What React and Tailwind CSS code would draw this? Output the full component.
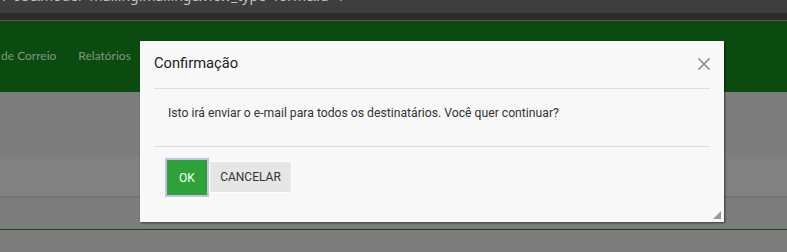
export default function App() {
  const font = { fontFamily: 'Roboto, "Liberation Sans", sans-serif' };
  return (
    <div className="relative w-[787px] h-[252px] overflow-hidden bg-[#7d7d7d]" style={font}>
      {/* browser top bar */}
      <div className="h-[13px] bg-[#3e3e3e] overflow-hidden relative">
        <div className="absolute left-[-3px] top-[-12px] text-[14px] text-[#c4c4c4] whitespace-nowrap leading-[16px]" style={{ fontFamily: '"Noto Sans", sans-serif' }}>
          n=95&amp;model=mailing.mailing&amp;view_type=form&amp;id=1
        </div>
      </div>
      <div className="h-[7px] bg-[#2c2c2c]" />
      <div className="h-[1px] bg-[#555555]" />
      {/* nav */}
      <div className="h-[71px] bg-[#0b4b10] flex items-center gap-[22px] pl-[1px] pb-[1px] text-[12px] text-[#7d9a7d]" style={{ fontFamily: 'Lato, sans-serif' }}>
        <span>de Correio</span>
        <span>Relatórios</span>
      </div>
      <div className="h-[65px]" />
      <div className="h-[39px] bg-[#818181]" />
      <div className="h-[2px] bg-[#737373]" />
      <div className="h-[31px]" />
      <div className="h-[1px] bg-[#0b4b10]" />

      {/* modal */}
      <div className="absolute left-[140px] top-[41px] w-[584px] h-[181px] bg-[#f8f8f8] shadow-[1px_1px_2px_rgba(0,0,0,0.55)] flex flex-col px-[14px]">
        <div className="h-[48px] flex items-center justify-between border-b border-[#dddddd] pb-[2px]">
          <span className="text-[14.7px] text-[#222222]">Confirmação</span>
          <svg width="14" height="14" viewBox="0 0 14 14" className="mr-[-1px]">
            <path d="M1.5 1.5 L12.5 12.5 M12.5 1.5 L1.5 12.5" stroke="#8a8a8a" strokeWidth="1.6" />
          </svg>
        </div>
        <div className="h-[58px] border-b border-[#dddddd] pl-[14px] pt-[15px] text-[12.2px] text-[#333333]">
          Isto irá enviar o e-mail para todos os destinatários. Você quer continuar?
        </div>
        <div className="flex items-start pt-[11px] pl-[11px]">
          <button className="h-[39px] w-[44px] border-2 border-[#c9c1db] bg-[#2ea23a] text-white text-[12px] flex items-center justify-center">
            OK
          </button>
          <button className="mt-[3px] h-[32px] w-[83px] border border-white bg-[#e6e6e6] text-[#333333] text-[12px] flex items-center justify-center">
            CANCELAR
          </button>
        </div>
        <svg className="absolute right-[3px] bottom-[3px]" width="8" height="8" viewBox="0 0 8 8">
          <path d="M8 0 L8 8 L0 8 Z" fill="#9a9a9a" />
        </svg>
      </div>
    </div>
  );
}
